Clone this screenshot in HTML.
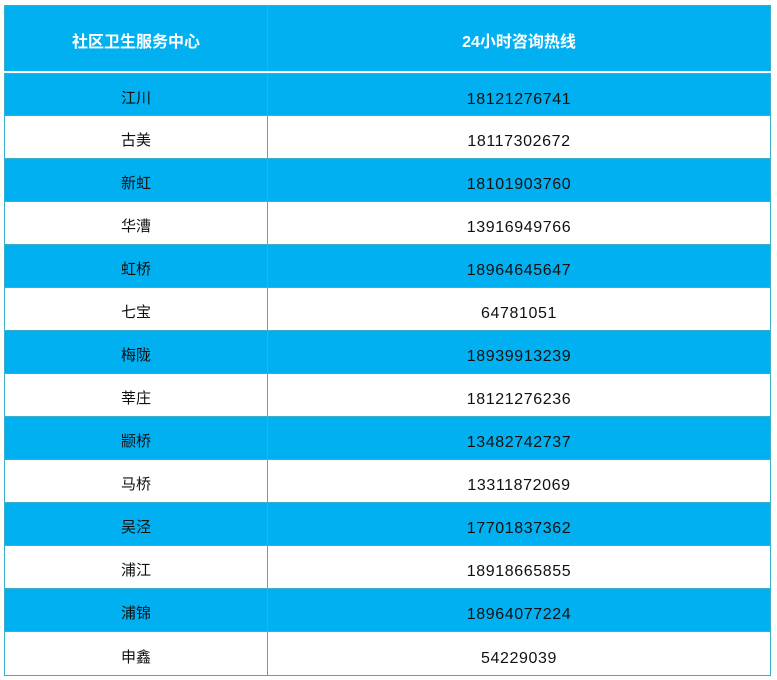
<!DOCTYPE html><html><head><meta charset="utf-8"><style>
body{margin:0;width:777px;height:680px;background:#fff;font-family:"Liberation Sans","Noto Sans CJK SC",sans-serif;position:relative;overflow:hidden}
.r{position:absolute;left:4px;width:767px;display:flex;box-sizing:border-box;border-left:1px solid #3aafc9;border-right:1px solid #3aafc9;border-bottom:1px solid #3aafc9}
.c1{width:262px;border-right:1px solid #3aafc9;display:flex;align-items:center;justify-content:center}
.c2{flex:1;display:flex;align-items:center;justify-content:center;letter-spacing:0.6px}
.d .c1{padding-top:5px}
.d .c2{padding-top:10px}
.b{background:#00b0f0}
.d{font-size:16px;color:#111}
.d .c1{font-size:15px}
.h{color:#fff;font-weight:bold;font-size:16px}
.h .c1,.h .c2{padding-top:2px}
</style></head><body>
<div class="r b h" style="top:5px;height:66px;border-top:1px solid #3aafc9;border-bottom:none"><div class="c1">社区卫生服务中心</div><div class="c2" style="letter-spacing:0">24小时咨询热线</div></div>
<div class="r b d" style="top:73px;height:43px;border-top:1px solid #3aafc9"><div class="c1">江川</div><div class="c2">18121276741</div></div>
<div class="r d" style="top:116px;height:43px"><div class="c1">古美</div><div class="c2">18117302672</div></div>
<div class="r b d" style="top:159px;height:43px"><div class="c1">新虹</div><div class="c2">18101903760</div></div>
<div class="r d" style="top:202px;height:43px"><div class="c1">华漕</div><div class="c2">13916949766</div></div>
<div class="r b d" style="top:245px;height:43px"><div class="c1">虹桥</div><div class="c2">18964645647</div></div>
<div class="r d" style="top:288px;height:43px"><div class="c1">七宝</div><div class="c2">64781051</div></div>
<div class="r b d" style="top:331px;height:43px"><div class="c1">梅陇</div><div class="c2">18939913239</div></div>
<div class="r d" style="top:374px;height:43px"><div class="c1">莘庄</div><div class="c2">18121276236</div></div>
<div class="r b d" style="top:417px;height:43px"><div class="c1">颛桥</div><div class="c2">13482742737</div></div>
<div class="r d" style="top:460px;height:43px"><div class="c1">马桥</div><div class="c2">13311872069</div></div>
<div class="r b d" style="top:503px;height:43px"><div class="c1">吴泾</div><div class="c2">17701837362</div></div>
<div class="r d" style="top:546px;height:43px"><div class="c1">浦江</div><div class="c2">18918665855</div></div>
<div class="r b d" style="top:589px;height:43px"><div class="c1">浦锦</div><div class="c2">18964077224</div></div>
<div class="r d" style="top:632px;height:44px"><div class="c1">申鑫</div><div class="c2">54229039</div></div>
</body></html>
